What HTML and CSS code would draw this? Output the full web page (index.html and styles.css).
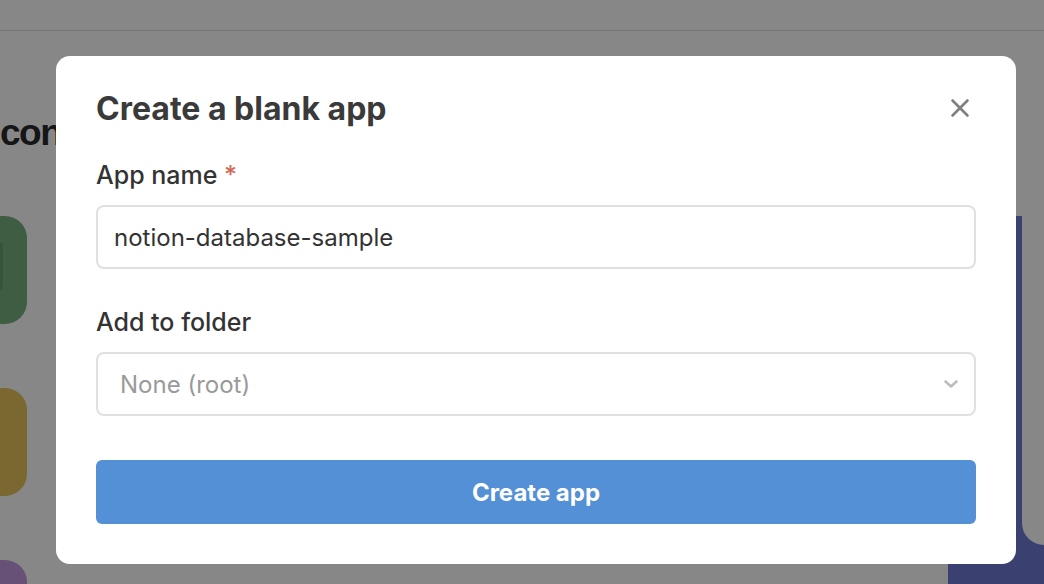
FILE: index.html
```html
<!DOCTYPE html>
<html lang="en">
<head>
<meta charset="utf-8">
<title>Create a blank app</title>
<link rel="stylesheet" href="styles.css">
</head>
<body>
<div class="page">
  <header class="topbar"></header>
  <div class="content">
    <h1 class="welcome">con</h1>
    <div class="board">
      <div class="tiles">
        <div class="tile tile-green"><span class="tile-glyph"></span></div>
        <div class="tile tile-yellow"></div>
        <div class="tile tile-purple"></div>
      </div>
      <aside class="side-panel">
        <div class="side-card"></div>
      </aside>
    </div>
  </div>
</div>

<div class="overlay">
  <div class="modal" role="dialog" aria-labelledby="modal-title">
    <div class="modal-header">
      <h2 class="modal-title" id="modal-title">Create a blank app</h2>
      <button class="close-btn" type="button" aria-label="Close">
        <svg width="20" height="20" viewBox="0 0 20 20" fill="none" stroke="currentColor" stroke-width="2.6" stroke-linecap="round">
          <path d="M2.5 2.5 L17.5 17.5 M17.5 2.5 L2.5 17.5"/>
        </svg>
      </button>
    </div>
    <form class="modal-form">
      <div class="field field-name">
        <label class="field-label" for="app-name">App name <span class="required">*</span></label>
        <input class="text-input" id="app-name" type="text" value="notion-database-sample">
      </div>
      <div class="field field-folder">
        <label class="field-label">Add to folder</label>
        <div class="select">
          <span class="select-placeholder">None (root)</span>
          <svg class="chevron" width="14" height="8" viewBox="0 0 14 8" fill="none" stroke="currentColor" stroke-width="2.6" stroke-linecap="round" stroke-linejoin="round">
            <path d="M1.5 1.5 L7 6.5 L12.5 1.5"/>
          </svg>
        </div>
      </div>
      <button class="primary-btn" type="button">Create app</button>
    </form>
  </div>
</div>
</body>
</html>
```

FILE: styles.css
```css
* { box-sizing: border-box; }

html, body {
  margin: 0;
  padding: 0;
}

body {
  width: 1044px;
  height: 584px;
  overflow: hidden;
  background: #ffffff;
  font-family: Inter, "Noto Sans", sans-serif;
}

.page {
  height: 584px;
  display: flex;
  flex-direction: column;
  overflow: hidden;
}

.topbar {
  height: 31px;
  flex: none;
  border-bottom: 1px solid #dedede;
  background: #ffffff;
}

.content {
  flex: 1;
  display: flex;
  flex-direction: column;
  min-height: 0;
  overflow: hidden;
}

.welcome {
  margin: 0;
  padding-top: 80px;
  font-family: "Liberation Sans", Arial, sans-serif;
  font-weight: 700;
  font-size: 37px;
  line-height: 44px;
  letter-spacing: -1.5px;
  color: #2a2a2a;
  flex: none;
}

.board {
  flex: 1;
  margin-top: 61px;
  display: flex;
  justify-content: space-between;
  min-height: 0;
}

.tiles {
  width: 27px;
  flex: none;
  display: flex;
  flex-direction: column;
  gap: 64px;
}

.tile {
  width: 108px;
  height: 108px;
  margin-left: -81px;
  border-radius: 22px;
  flex: none;
  display: flex;
  align-items: center;
  justify-content: flex-end;
  padding-right: 24px;
}

.tile-green { background: #76b07e; }
.tile-yellow { background: #e8c45b; }
.tile-purple { background: #c49ae0; }

.tile-glyph {
  width: 30px;
  height: 48px;
  border-radius: 4px;
  background: #62a06c;
  margin-top: -8px;
}

.side-panel {
  width: 96px;
  flex: none;
  background: #6f79d3;
}

.side-card {
  margin-left: 74px;
  height: 329px;
  background: #ffffff;
  border-radius: 0 0 0 26px;
}

/* overlay + modal */
.overlay {
  position: fixed;
  inset: 0;
  background: rgba(0, 0, 0, 0.47);
  display: flex;
  align-items: flex-start;
  padding: 56px 0 0 56px;
}

.modal {
  width: 960px;
  background: #ffffff;
  border-radius: 14px;
  padding: 34px 40px 40px;
}

.modal-header {
  display: flex;
  align-items: center;
  justify-content: space-between;
  margin-bottom: 32px;
}

.modal-title {
  margin: 0;
  font-size: 32px;
  line-height: 38px;
  font-weight: 700;
  color: #3a3a3a;
}

.close-btn {
  width: 24px;
  height: 24px;
  padding: 2px;
  margin: -2px 4px 0 0;
  border: none;
  background: none;
  color: #7f7f7f;
  display: flex;
  align-items: center;
  justify-content: center;
  cursor: pointer;
}

.modal-form {
  display: flex;
  flex-direction: column;
}

.field {
  display: flex;
  flex-direction: column;
}

.field-name { margin-bottom: 38px; }
.field-folder { margin-bottom: 44px; }

.field-label {
  font-size: 25px;
  line-height: 30px;
  font-weight: 500;
  color: #333333;
  margin-bottom: 15px;
}

.required {
  color: #d26a59;
}

.text-input {
  height: 64px;
  width: 100%;
  border: 2px solid #e0e0e0;
  border-radius: 8px;
  padding: 0 16px;
  font-family: Inter, "Noto Sans", sans-serif;
  font-size: 24px;
  color: #333333;
  background: #ffffff;
  outline: none;
}

.select {
  height: 64px;
  border: 2px solid #e0e0e0;
  border-radius: 8px;
  padding: 0 16px 0 22px;
  display: flex;
  align-items: center;
  justify-content: space-between;
}

.select-placeholder {
  font-size: 24px;
  color: #9a9a9a;
}

.chevron {
  color: #bdbdbd;
}

.primary-btn {
  height: 64px;
  width: 100%;
  border: none;
  border-radius: 6px;
  background: #5390d6;
  color: #ffffff;
  font-family: Inter, "Noto Sans", sans-serif;
  font-size: 24px;
  font-weight: 700;
  cursor: pointer;
}
```
